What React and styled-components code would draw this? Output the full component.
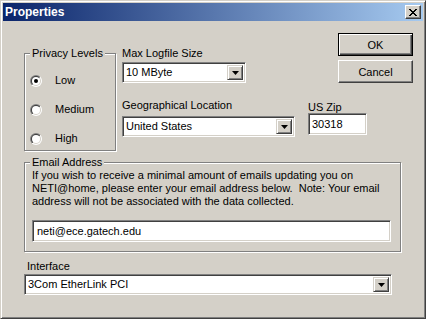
import React from "react";
import styled, { createGlobalStyle } from "styled-components";

const GlobalStyle = createGlobalStyle`
  html, body {
    margin: 0;
    padding: 0;
    background: #d4d0c8;
  }
  body {
    font-family: "Liberation Sans", Arial, sans-serif;
    font-size: 11px;
    color: #000;
  }
`;

const Window = styled.div`
  box-sizing: border-box;
  width: 426px;
  height: 319px;
  padding: 2px;
  background: #d4d0c8;
  border: 1px solid;
  border-color: #d4d0c8 #404040 #404040 #d4d0c8;
  box-shadow: inset 1px 1px #ffffff, inset -1px -1px #808080;
  display: flex;
  flex-direction: column;
`;

const TitleBar = styled.div`
  height: 18px;
  display: flex;
  align-items: center;
  padding: 0 2px 0 2px;
  background: linear-gradient(to right, #0a246a, #a6caf0);
`;

const Title = styled.span`
  flex: 1;
  color: #fff;
  font-weight: bold;
  font-size: 12px;
  line-height: 18px;
`;

const CloseButton = styled.div`
  box-sizing: border-box;
  width: 16px;
  height: 14px;
  background: #d4d0c8;
  border: 1px solid;
  border-color: #ffffff #404040 #404040 #ffffff;
  box-shadow: inset -1px -1px #808080;
  display: flex;
  align-items: center;
  justify-content: center;
`;

const Body = styled.div`
  padding: 0 10px 0 21px;
`;

const TopSection = styled.div`
  display: flex;
  align-items: flex-start;
`;

const Group = styled.div`
  position: relative;
  flex-shrink: 0;
  box-sizing: border-box;
  width: ${p => p.$width}px;
  height: ${p => p.$height}px;
  margin-top: ${p => p.$top}px;
  border: 1px solid #808080;
  box-shadow: inset 1px 1px #ffffff, 1px 1px #ffffff;
  padding: ${p => p.$padding};
`;

const Legend = styled.span`
  position: absolute;
  top: -7px;
  left: 5px;
  padding: 0 2px;
  line-height: 13px;
  white-space: nowrap;
  background: #d4d0c8;
`;

const RadioList = styled.div`
  display: flex;
  flex-direction: column;
  gap: 16px;
`;

const RadioRow = styled.label`
  display: flex;
  align-items: center;
  height: 13px;
  line-height: 13px;
  gap: 13px;
`;

const RightArea = styled.div`
  flex: 1;
  margin-left: 6px;
  display: flex;
  flex-direction: column;
`;

const FieldRow = styled.div`
  display: flex;
  align-items: flex-start;
  margin-top: ${p => p.$top || 0}px;
`;

const Field = styled.div`
  display: flex;
  flex-direction: column;
  margin-left: ${p => p.$left || 0}px;
  margin-top: ${p => p.$top || 0}px;
`;

const Label = styled.div`
  line-height: ${p => p.$lh || 13}px;
  margin-bottom: ${p => p.$gap || 0}px;
  margin-left: ${p => p.$indent || 0}px;
  white-space: nowrap;
`;

const Sunken = styled.div`
  box-sizing: border-box;
  flex-shrink: 0;
  width: ${p => p.$width}px;
  height: ${p => p.$height || 21}px;
  background: #fff;
  border: 1px solid;
  border-color: #808080 #ffffff #ffffff #808080;
  box-shadow: inset 1px 1px #404040, inset -1px -1px #d4d0c8;
  display: flex;
  align-items: center;
  padding: 2px 2px 2px 3px;
  line-height: 13px;
  white-space: nowrap;
`;

const ComboText = styled.span`
  flex: 1;
  overflow: hidden;
`;

const ArrowButton = styled.div`
  box-sizing: border-box;
  width: 16px;
  height: 100%;
  background: #d4d0c8;
  border: 1px solid;
  border-color: #d4d0c8 #404040 #404040 #d4d0c8;
  box-shadow: inset 1px 1px #ffffff, inset -1px -1px #808080;
  display: flex;
  align-items: center;
  justify-content: center;
`;

const ButtonColumn = styled.div`
  flex-shrink: 0;
  margin: 12px 0 0 auto;
  display: flex;
  flex-direction: column;
  gap: 4px;
`;

const Button = styled.div`
  box-sizing: border-box;
  width: 75px;
  height: 23px;
  display: flex;
  align-items: center;
  justify-content: center;
  background: #d4d0c8;
  border: 1px solid;
  border-color: ${p =>
    p.$default ? "#000" : "#ffffff #404040 #404040 #ffffff"};
  box-shadow: ${p =>
    p.$default
      ? "inset 1px 1px #ffffff, inset -1px -1px #404040, inset -2px -2px #808080"
      : "inset -1px -1px #808080"};
`;

const Note = styled.div`
  line-height: 13px;
  white-space: pre;
`;

const EmailInput = styled(Sunken)`
  margin-top: 12px;
  padding-left: 4px;
`;

const InterfaceBlock = styled.div`
  margin-top: 8px;
`;

const Radio = ({ checked }) => (
  <svg width="12" height="12" viewBox="0 0 12 12">
    <defs>
      <linearGradient id="ro" x1="0" y1="0" x2="1" y2="1">
        <stop offset="50%" stopColor="#808080" />
        <stop offset="50%" stopColor="#ffffff" />
      </linearGradient>
      <linearGradient id="ri" x1="0" y1="0" x2="1" y2="1">
        <stop offset="50%" stopColor="#404040" />
        <stop offset="50%" stopColor="#d4d0c8" />
      </linearGradient>
    </defs>
    <circle cx="6" cy="6" r="6" fill="url(#ro)" />
    <circle cx="6" cy="6" r="5" fill="url(#ri)" />
    <circle cx="6" cy="6" r="4" fill="#fff" />
    {checked && <circle cx="6" cy="6" r="2" fill="#000" />}
  </svg>
);

const DownArrow = () => (
  <svg width="7" height="4" viewBox="0 0 7 4">
    <path d="M0 0h7L3.5 4z" fill="#000" />
  </svg>
);

const Combo = ({ width, children }) => (
  <Sunken $width={width}>
    <ComboText>{children}</ComboText>
    <ArrowButton>
      <DownArrow />
    </ArrowButton>
  </Sunken>
);

const App = () => (
  <>
    <GlobalStyle />
    <Window>
      <TitleBar>
        <Title>Properties</Title>
        <CloseButton>
          <svg width="8" height="7" viewBox="0 0 8 7">
            <path d="M0 0l7 7M1 0l7 7M7 0L0 7M8 0L1 7" stroke="#000" strokeWidth="1" />
          </svg>
        </CloseButton>
      </TitleBar>
      <Body>
        <TopSection>
          <Group $width={92} $height={98} $top={32} $padding="20px 0 0 5px">
            <Legend>Privacy Levels</Legend>
            <RadioList>
              <RadioRow>
                <Radio checked />
                Low
              </RadioRow>
              <RadioRow>
                <Radio />
                Medium
              </RadioRow>
              <RadioRow>
                <Radio />
                High
              </RadioRow>
            </RadioList>
          </Group>
          <RightArea>
            <FieldRow>
              <Field $top={26}>
                <Label $gap={2}>Max Logfile Size</Label>
                <Combo width={124}>10 MByte</Combo>
              </Field>
              <ButtonColumn>
                <Button $default>OK</Button>
                <Button>Cancel</Button>
              </ButtonColumn>
            </FieldRow>
            <FieldRow $top={16}>
              <Field>
                <Label $gap={4}>Geographical Location</Label>
                <Combo width={173}>United States</Combo>
              </Field>
              <Field $left={13} $top={3}>
                <Label $lh={11}>US Zip</Label>
                <Sunken $width={59} $height={22}>30318</Sunken>
              </Field>
            </FieldRow>
          </RightArea>
        </TopSection>
        <Group $width={377} $height={90} $top={11} $padding="6px 0 0 7px">
          <Legend>Email Address</Legend>
          <Note>
            {"If you wish to receive a minimal amount of emails updating you on\nNETI@home, please enter your email address below.  Note: Your email\naddress will not be associated with the data collected."}
          </Note>
          <EmailInput $width={359} $height={22}>
            neti@ece.gatech.edu
          </EmailInput>
        </Group>
        <InterfaceBlock>
          <Label $indent={3} $gap={1}>Interface</Label>
          <Combo width={368}>3Com EtherLink PCI</Combo>
        </InterfaceBlock>
      </Body>
    </Window>
  </>
);

export default App;
